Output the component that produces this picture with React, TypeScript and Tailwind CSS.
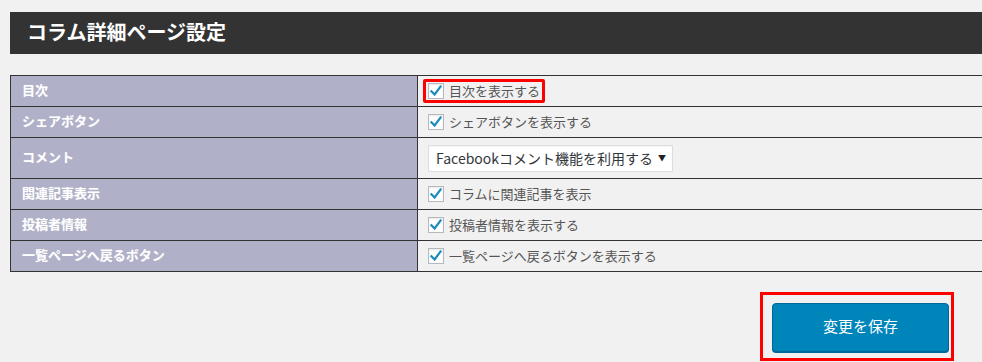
import React from "react";

const font = { fontFamily: '"Noto Sans CJK JP", "Noto Sans", sans-serif' };

function Check() {
  return (
    <span className="relative flex h-[16px] w-[16px] shrink-0 items-center justify-center border border-[#b4b9be] bg-white shadow-[inset_0_1px_2px_rgba(0,0,0,0.1)]">
      <svg viewBox="0 0 20 20" className="h-[18px] w-[18px] -mt-[1px]">
        <path d="M3.5 10.5 L8 15 L16.5 3.5" fill="none" stroke="#1e8cbe" strokeWidth="3.2" strokeLinecap="square" />
      </svg>
    </span>
  );
}

function CheckItem({ label, highlight }: { label: string; highlight?: boolean }) {
  return (
    <span className="relative inline-flex items-center gap-[5px]">
      {highlight && (
        <span className="pointer-events-none absolute -left-[5px] -right-[5px] -top-[4px] -bottom-[4px] rounded-[2px] border-[3px] border-[#ff0000]" />
      )}
      <Check />
      <span className="text-[13px] leading-[16px] text-[#555]">{label}</span>
    </span>
  );
}

function Row({ label, children, tall }: { label: string; children: React.ReactNode; tall?: boolean }) {
  return (
    <div className={`flex border-b border-[#333] ${tall ? "h-[41px]" : "h-[31px]"}`}>
      <div className="flex w-[407px] shrink-0 items-center border-r border-[#333] bg-[#b0b1c8] pl-[11px] pb-[3px] text-[13px] font-bold text-white [text-shadow:0_0_1px_rgba(255,255,255,0.3)]">
        {label}
      </div>
      <div className="flex flex-1 items-center pl-[10px]">{children}</div>
    </div>
  );
}

export default function App() {
  return (
    <div className="h-[362px] w-[982px] overflow-hidden bg-[#f1f1f1] pl-[10px] pt-[12px]" style={font}>
      <div className="flex h-[42px] items-center bg-[#333333] pl-[17px] pb-[2px] text-[20px] font-bold text-white">
        コラム詳細ページ設定
      </div>
      <div className="mt-[21px] w-[1000px] border-l border-t border-[#333]">
        <Row label="目次">
          <CheckItem label="目次を表示する" highlight />
        </Row>
        <Row label="シェアボタン">
          <CheckItem label="シェアボタンを表示する" />
        </Row>
        <Row label="コメント" tall>
          <div className="flex h-[27px] w-[245px] items-center justify-between border border-[#dddddd] bg-white pl-[7px] pr-[6px] shadow-[inset_0_1px_2px_rgba(0,0,0,0.05)]">
            <span className="text-[14px] text-[#32373c]">Facebookコメント機能を利用する</span>
            <span className="text-[8px] leading-none text-[#222]">▼</span>
          </div>
        </Row>
        <Row label="関連記事表示">
          <CheckItem label="コラムに関連記事を表示" />
        </Row>
        <Row label="投稿者情報">
          <CheckItem label="投稿者情報を表示する" />
        </Row>
        <Row label="一覧ページへ戻るボタン">
          <CheckItem label="一覧ページへ戻るボタンを表示する" />
        </Row>
      </div>
      <div className="mt-[31px] flex justify-end pr-[33px]">
        <div className="relative">
          <span className="pointer-events-none absolute -left-[12px] -right-[5px] -top-[11px] -bottom-[9px] border-[3px] border-[#ff0000]" />
          <button className="flex h-[49px] w-[177px] items-center justify-center rounded-[4px] border border-[#006799] bg-[#0085ba] pb-[2px] text-[15px] text-white shadow-[0_1px_0_#006799]">
            変更を保存
          </button>
        </div>
      </div>
    </div>
  );
}
